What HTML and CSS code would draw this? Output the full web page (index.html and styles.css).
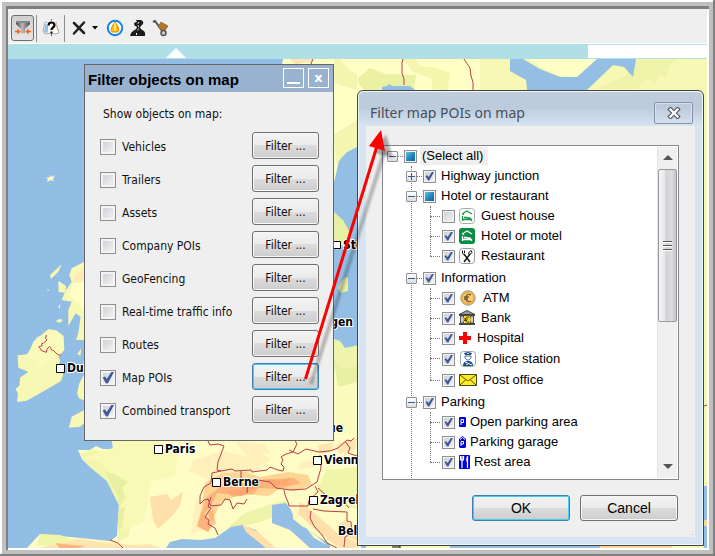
FILE: index.html
```html
<!DOCTYPE html>
<html lang="en">
<head>
<meta charset="utf-8">
<title>Filter objects on map</title>
<link rel="stylesheet" href="styles.css">
</head>
<body>
<div class="frame">
<div class="screen">
  <div class="toolbar">
    <button class="tool pressed" aria-label="Filter objects">
      <svg width="18" height="18" viewBox="0 0 18 18"><defs><linearGradient id="fun"><stop offset="0" stop-color="#444"/><stop offset=".45" stop-color="#bbb"/><stop offset="1" stop-color="#444"/></linearGradient></defs><path d="M2 2h14v3l-5 5v4H7v-4L2 5z" fill="url(#fun)"/><path d="M2 2h14v2H2z" fill="#888"/><path d="M1 12.500h4M17 12.500h-4M3.500 10.500l2 2-2 2M14.500 10.500l-2 2 2 2" fill="none" stroke="#f5611c" stroke-width="1.500"/></svg>
    </button>
    <span class="sep"></span>
    <button class="tool" aria-label="Map help">
      <svg width="18" height="18" viewBox="0 0 18 18"><path d="M3 3l5 1 6-1 3 11-4 1-4-1-6 1-2-3z" fill="#fff" stroke="#aaa"/><path d="M3 5l3 1-1 7-3 1z" fill="#8fc4ee"/><path d="M6 5l-1 9M14 5l2 7" stroke="#ef9d80"/><path d="M9.500 0v3M9.500 15v2" stroke="#e33"/><path d="M6.500 6.500q0-3 3-3t3 2.500q0 1.500-1.500 2.500-1.500 1-1.500 2.500" fill="none" stroke="#fff" stroke-width="4"/><path d="M6.500 6.500q0-3 3-3t3 2.500q0 1.500-1.500 2.500-1.500 1-1.500 2.500" fill="none" stroke="#000" stroke-width="2.200"/><path d="M8.500 12.500h2v2h-2z"/></svg>
    </button>
    <span class="sep"></span>
    <button class="tool" aria-label="Delete">
      <svg width="14" height="14" viewBox="0 0 14 14"><path d="M2 2l10 10M12 1.500L2 12.500" stroke="#222" stroke-width="2.500" stroke-linecap="round"/></svg>
    </button>
    <button class="tool caret" aria-label="Delete options">
      <svg width="6" height="4" viewBox="0 0 6 4"><path d="M0 0h6L3 3.500z"/></svg>
    </button>
    <button class="tool alert" aria-label="Traffic events">
      <svg width="18" height="18" viewBox="0 0 18 18"><circle cx="9" cy="9" r="7.200" fill="#fff" stroke="#0b87ea" stroke-width="2"/><path d="M9 3q-3 3-4 8l1 2h6l1-2q-1-5-4-8z" fill="#ffb90c" stroke="#e88b00"/><path d="M9 4v8" stroke="#fff1a5" stroke-width="1.500"/></svg>
    </button>
    <button class="tool" aria-label="Routes">
      <svg width="17" height="18" viewBox="0 0 17 18"><path d="M7 1h5q3 1 2 4l-3 3q0 2 4 4 2 2 1 5H1q0-3 3-5 4-2 4-4-3-1-3-3 0-2 3-2z" fill="#1d1d1d"/><path d="M10 3Q8 5 9.500 7.500 10 10 8 12M7.500 14v2" fill="none" stroke="#fff" stroke-dasharray="2 1.500"/></svg>
    </button>
    <button class="tool" aria-label="Transport">
      <svg width="18" height="18" viewBox="0 0 18 18"><path d="M1 3l2-1 8 11" fill="none" stroke="#555" stroke-width="2"/><path d="M9 3l7 4-4 6-6-5z" fill="#b5762c" stroke="#80521e" stroke-width=".6"/><circle cx="11.500" cy="14" r="2.500" fill="#ccc" stroke="#555" stroke-width="1.500"/></svg>
    </button>
  </div>
  <div class="band"><span class="notch"></span><span class="band-field"></span></div>

  <main class="map">
    <svg class="map-art" viewBox="8 59 699 489" preserveAspectRatio="xMinYMin slice" role="img" aria-label="Map of Europe">
      <defs>
        <pattern id="dots" width="2" height="2" patternUnits="userSpaceOnUse"><path d="M0 0h1v1H0z" fill="#7fb1df" opacity=".35"/></pattern>
        <filter id="soft" x="-20%" y="-20%" width="140%" height="140%"><feGaussianBlur stdDeviation="1.200"/></filter>
      </defs>
      <path d="M8 59h699v489H8z" fill="#94bfe5"/>
      <path d="M8 59h699v489H8z" fill="url(#dots)"/>
      <path d="M46 178l4-1 1-2 1 2 3-2-2 4 1 2-3-1-4 2 1-3z" fill="#ffffc6"/>
      <path d="M283 59l-1 5 8 30h70v53l-7 2-8 10-9 12-4 22-10 30v40l14 9 9-4 3-9-7-9-7-8V59h375v489H560l-26-40z" fill="#f8f8b5"/>
      <!-- top -->
      <path d="M350 59h130v32H350zM530 59h80l-25 18-24-1-20-9z" fill="#ffffc6"/>
      <path d="M283 59h74v30h-74z" fill="#ffffc6"/>
      <path d="M338 59h10l4 4 4 9-8 3-10-4-4-4z" fill="#ffe0aa"/>
      <path d="M290 59l22 0 1 3-10 1-8 2zM334 114l5 6-5 1z" fill="#ffe6b8"/>
      <path d="M370 68l16 6 30 1-2 14-50 1-8-10z" fill="#eaf1a2"/>
      <path d="M640 59h37l-8 8-3 12-6-5-5 10-7-6-10 11h-42l30-14 6-12z" fill="#eff4aa"/>
      <path d="M403 59h13l3 7 17 2 14 5-2 17h-15l-2-12-18-6z" fill="#f6f5ae"/>
      <path d="M510 59h13l17 10 20 8h17l20-18h39l-3 18-9-10-11-2-26 25h-60l-1-10-16-9z" fill="#94bfe5"/>
      <path d="M382 91v-4l5-1 2-2 3 2h18l5 4v1z" fill="#94bfe5"/>
      <!-- gap between the windows -->
      <path d="M334 147h24v204h-24z" fill="#94bfe5"/>
      <path d="M334 59h24v87l-10 5-9 9-3 14-2 8z" fill="#ffffc6"/>
      <path d="M334 59h6l10 12 7 3v16l-23-7zM357 120v27l-12 6-9 12-2-30z" fill="#f4f5ae"/>
      <path d="M334 212l9 8 8 14-5 8-8 8-4-2zM338 288l6-10 4-1v14l-7 2z" fill="#e6efa2"/>
      <path d="M334 339l6 2 5 7 13-3v45h-24z" fill="#eff4ac"/>
      <path d="M334 370h24v80h-24z" fill="#fcfbbd"/><path d="M334 360l10 9 14-3v16l-20 5z" fill="#e6efa2"/>
      <!-- British Isles -->
      <g transform="translate(0 250) scale(.3333)">
        <path d="M145 238l24 3 22 17 2 42-18 22 5 8-4 18 14 25-7 20-60 35-43 24-26 4-3-3 3-22-7-15 11-9 2-24 25-18-30-12-2-37 31-3 17-39z" fill="#f7f8b3"/>
        <path d="M110 260l60-14 18 15 4 40-30 12-40 40-10-20-40-15 20-20z" fill="#ffffc6" opacity=".4"/>
        <path d="M150 75l35-32-10 22-22 22zM175 92l23 16-2 20-20-2zM175 170l5-8v16zM170 210l12-4 6 6-8 6-10-2zM140 120l6-3v6zM232 312l12-17-3 22zM253 35l-38 20-7 20 7 20-20 30-10 25 30 5-10 25v48l22-38 15 10-7 50-7 20h26zM254 370l-16 30-7 30 6 15 20 8zM253 480l-38 20-8 33 33-3 14-11z" fill="#f7f8b3"/>
        <path d="M253 55l-30 20-3 25-15 25 30 10 18 35z" fill="#ffe9b6"/>
        <path d="M253 95l-35 5-10 35 15 15 30 30z" fill="#ffffc6"/>
        <path d="M139 255l-2 10 4 5-10 9-7 3 3 5-11 4 6 5 2 6 15 5 3-12 7-5 3 2 2 8 7 2 12 12 10 2" fill="none" stroke="#bd3d49" stroke-width="3"/>
      </g>
      <!-- France, Spain, Alps -->
      <path d="M111 435h250v113H27l13-14 20 2 50 5 7-5 2-31-12-24-18-15-7-7-4-9h12l6-4 7 3h10z" fill="#fffdc5"/>
      <path d="M80 454l12-5 8 3h13v-11h28l-3 20 8 14-6 22-6 10-6 30-10 5 1-37-12-24-18-15z" fill="#f1f6ac"/>
      <path d="M113 441h45l20 15-3 20-24 5-7 40-20 10-4-34-6-20-14-14-17-5 15-5 15-5z" fill="#f8f9b4"/>
      <path d="M106 472l8 2 14 8-6 6 4 10-7 8-2-12-8-14zM119 510l6-3-3 20-5 3z" fill="#e6efa2"/>
      <path d="M150 497l17-3 4 6 12-8-3 14-8 10-14 13-5-9-2-15z" fill="#ffe0aa"/>
      <path d="M193 460l30-9 20 5 14-7 14 10-13 12-29 3-20 6-20-9zM235 441l30 3 5 9-24 2zM298 464l24-7-8 10-15 3zM196 500h12l4 28-22 6z" fill="#fff0bc"/>
      <path d="M205 483l17-10 25-1 13 5 28-5 20 3 4 10-17 6-16-2-10 7-28-2-20 8-12 26-12-2 5-20z" fill="#ffd596"/>
      <path d="M207 497l13-10 21-3 17-4 36-2 7 5-22 6-23-1-14 8-25-3-5 11-8 10 8 12-4 6-11-6 4-12z" fill="#fcb47c"/>
      <path d="M226 492l14-3 12-5 7 4-6 6-20 3zM265 479l18 2 7-4-3 8-12 1zM208 512l5-2 3 14-5 2z" fill="#f99a63" opacity=".5"/>
      <path d="M245 513l20-7 22-6-5 14-25 9-30 6 8-8z" fill="#edf3a8"/>
      <path d="M166 548l4-6 12-3 18 1 15-2 16-11 11-2 14 5 12 18z" fill="#94bfe5"/>
      <path d="M272 505l14-2 5 7 4 10 19 14 16 10v4h-20l-20-18-18-7z" fill="#94bfe5"/>
      <path d="M293 511l4-3 3 12 8 8-5-1-10-8zM307 529l12 9 8 7-13-7z" fill="#fff9bd"/>
      <path d="M242 524l16 8 18 16h-10l-20-16zM300 502l12 9 25 22 21 10v5h-18l-22-16-20-18zM337 526l9-7 5 9 6 3v10l-10-4z" fill="#ffe0aa"/>
      <path d="M326 470l31-3v42l-25-6-15-12z" fill="#eff5a9"/>
      <path d="M336 445l20-7v11l-17 5zM318 445l16-2-4 9-11 2z" fill="#ffe5b0"/>
      <path d="M60 541l20-2 28 4 25 2 16-1 12 4H40z" fill="#ffe5ae"/><path d="M40 534l20 1 15 5-18 4-20 2z" fill="#eff5a9"/><path d="M55 543l8 1 22 2-6 2H60z" fill="#fcb47c"/>
      <path d="M366 546h84v2h-84z" fill="#f8f8b5"/><path d="M450 546h150v2H450zM704 486h3v62h-3z" fill="#94bfe5"/><path d="M704 520h3v6h-3zM600 546h72v2h-72z" fill="#ffd596"/>
      <!-- borders -->
      <path d="M313 59l-3 7M403 59l-1 4v10l2 6v6M464 59l6 9 1 8 2 6v8M208 441l2 4 8-1 6 2-3 8-3 8-1 8 4 1 11-2 3 2 16-1 1 2 15-2 3-3 8 3 5 1 1-4-3-3 2-4-2-3 5-3 7-2 4-8-4-7-7-6M289 450l9 4 3-2 5-3 13 3 11-1 8-3 9-8 4 1 3-3M221 471l-9 2-1 10-7 4-4 9v8l4-4 4-1 3 7 10-1 4-6 5 1 3 9 4-6 7 1 3-5M211 497l-3 10 3 1-4 6-2 3 4 3-1 4 7 4 3 7M241 471v11l7-3-1 14M258 480l12 2 6 6 15 2 15-1 11-7 4-14-1-13M284 490l1 5 3 7 1 4h19l1-6 9-8-3-6M318 488l9 8 10 4 7 2 5 6M311 511l-1 7 4 8 8 9 5 8 10 5M313 509l11 2 23 1v9l4 1 1 11-7 4-1 10M345 441l5 7-2 5 9 3M110 540l8 3 5 5M704 406l3-1" fill="none" stroke="#b83e48"/>
      <path d="M392 546h8v2h-8" fill="none" stroke="#111"/>
      <g class="city-dots"><path d="M56.500 364.500h8v8h-8zM154.500 445.500h8v8h-8zM212.500 478.500h8v8h-8zM313.500 456.500h8v8h-8zM309.500 496.500h8v8h-8zM333.500 241.500h7v7h-7z"/></g>
      <g class="city-names">
        <text x="67" y="372">Dublin</text><text x="165" y="453">Paris</text><text x="223" y="486">Berne</text>
        <text x="324" y="464">Vienna</text><text x="320" y="504">Zagreb</text><text x="338" y="535">Belgrade</text>
        <text x="343" y="249">Stockholm</text><text x="353" y="326" text-anchor="end">gen</text><text x="343" y="432" text-anchor="end">ue</text>
      </g>
    </svg>

    <section class="panel" aria-label="Filter objects on map">
      <header class="panel-head"><h1>Filter objects on map</h1><button class="mini" aria-label="Minimize"><span class="dash"></span></button><button class="mini" aria-label="Close">x</button></header>
      <div class="panel-body">
        <p>Show objects on map:</p>
        <div class="option"><label><input class="big" type="checkbox">Vehicles</label><button class="btn">Filter ...</button></div>
        <div class="option"><label><input class="big" type="checkbox">Trailers</label><button class="btn">Filter ...</button></div>
        <div class="option"><label><input class="big" type="checkbox">Assets</label><button class="btn">Filter ...</button></div>
        <div class="option"><label><input class="big" type="checkbox">Company POIs</label><button class="btn">Filter ...</button></div>
        <div class="option"><label><input class="big" type="checkbox">GeoFencing</label><button class="btn">Filter ...</button></div>
        <div class="option"><label><input class="big" type="checkbox">Real-time traffic info</label><button class="btn">Filter ...</button></div>
        <div class="option"><label><input class="big" type="checkbox">Routes</label><button class="btn">Filter ...</button></div>
        <div class="option"><label><input class="big" type="checkbox" checked>Map POIs</label><button class="btn active">Filter ...</button></div>
        <div class="option"><label><input class="big" type="checkbox" checked>Combined transport</label><button class="btn">Filter ...</button></div>
      </div>
    </section>

    <section class="dialog" aria-label="Filter map POIs on map">
      <header class="dialog-head"><h2>Filter map POIs on map</h2>
        <button class="close" aria-label="Close"><svg width="14" height="12" viewBox="0 0 14 12"><path d="M3.500 2.500l7 7M10.500 2.500l-7 7" stroke="#4a5058" stroke-width="4.500" stroke-linecap="square"/><path d="M3.500 2.500l7 7M10.500 2.500l-7 7" stroke="#fff" stroke-width="2.400" stroke-linecap="square"/></svg></button>
      </header>
      <div class="dialog-body">
        <div class="listbox">
          <div class="tree">
            <div class="row"><button class="exp" aria-label="Collapse"></button><label><input type="checkbox" class="mixed"><span class="selected">(Select all)</span></label></div>
            <ul class="groups">
              <li><div class="row"><button class="exp plus" aria-label="Expand"></button><label><input type="checkbox" checked>Highway junction</label></div></li>
              <li><div class="row"><button class="exp" aria-label="Collapse"></button><label><input type="checkbox" class="mixed">Hotel or restaurant</label></div>
                <ul class="items">
                  <li class="row"><label><input type="checkbox"><svg width="16" height="16" viewBox="0 0 16 16"><rect x=".5" y=".5" width="15" height="15" rx="3" fill="#fff" stroke="#aaa"/><path d="M3 6l5-3 5 3M4.500 6v1M3.500 8v5M3.500 11.500h9V13M5 9.500h2l5 1" fill="none" stroke="#109848" stroke-width="1.300"/></svg>Guest house</label></li>
                  <li class="row"><label><input type="checkbox" checked><svg width="16" height="16" viewBox="0 0 16 16"><rect width="16" height="16" rx="3" fill="#078e43"/><path d="M3 6l5-3 5 3M4.500 6v1M3.500 8v5M3.500 11.500h9V13M5 9.500h2l5 1" fill="none" stroke="#fff" stroke-width="1.300"/></svg>Hotel or motel</label></li>
                  <li class="row"><label><input type="checkbox" checked><svg width="16" height="16" viewBox="0 0 16 16"><rect x=".5" y=".5" width="15" height="15" rx="3" fill="#fff" stroke="#999"/><path d="M5 6l6 8M11 6l-6 8" stroke="#111" stroke-width="1.400"/><path d="M3.500 2.500v3l2 1.500M5.500 2.500V5M12 2.500L9.500 5l1 2L13 4.500z" fill="none" stroke="#111"/></svg>Restaurant</label></li>
                </ul>
              </li>
              <li class="spaced"><div class="row"><button class="exp" aria-label="Collapse"></button><label><input type="checkbox" checked>Information</label></div>
                <ul class="items">
                  <li class="row"><label><input type="checkbox" checked><svg width="18" height="16" viewBox="0 0 18 16"><circle cx="9" cy="8" r="7.200" fill="#ffbe48" stroke="#999"/><circle cx="9" cy="8" r="5.500" fill="#ffcc70" stroke="#e9a62e"/><path d="M12 5q-4-2-5 2v2q1 4 5 2M5 7h5M5 9h4" fill="none" stroke="#705a32" stroke-width="1.300"/></svg>ATM</label></li>
                  <li class="row"><label><input type="checkbox" checked><svg width="16" height="16" viewBox="0 0 16 16"><path d="M0 4l8-4 8 4v2H0zM0 13h16v2H0z" fill="#444"/><path d="M2 4l6-3 6 3z" fill="#999"/><path d="M1.500 6h3v7h-3zM11.500 6h3v7h-3z" fill="#ccc" stroke="#555"/><circle cx="8" cy="9.500" r="3.800" fill="#fd0"/><path d="M10.500 7.500Q7 5.500 6.500 9.500 7 13 10.500 12M5 9h4M5 10.500h3" fill="none" stroke="#222" stroke-width=".8"/></svg>Bank</label></li>
                  <li class="row"><label><input type="checkbox" checked><svg width="12" height="12" viewBox="0 0 12 12"><path d="M4 0h4v4h4v4H8v4H4V8H0V4h4z" fill="#f00"/></svg>Hospital</label></li>
                  <li class="row tall"><label><input type="checkbox" checked><svg width="18" height="16" viewBox="0 0 18 16"><rect x="1.500" y=".5" width="15" height="15" rx="3" fill="#fff" stroke="#9aa"/><path d="M5 2l4-1 4 1-1 2H6zM4 15q0-5 5-5t5 5z" fill="#164c98"/><path d="M6 5h6v2l-2 2H8L6 7z" fill="#fff" stroke="#164c98" stroke-width=".8"/><path d="M6 11l7 3" stroke="#fff"/><path d="M8 2h2v1H8zM7 13h2v1H7z" fill="#fd0"/></svg>Police station</label></li>
                  <li class="row"><label><input type="checkbox" checked><svg width="18" height="12" viewBox="0 0 18 12"><path d="M.5.500h17v11H.5z" fill="#ffec28" stroke="#4b4700"/><path d="M1 1l8 6 8-6M1 11l6-5.500M17 11l-6-5.500" fill="none" stroke="#4b4700" stroke-width=".9"/></svg>Post office</label></li>
                </ul>
              </li>
              <li class="spaced"><div class="row"><button class="exp" aria-label="Collapse"></button><label><input type="checkbox" checked>Parking</label></div>
                <ul class="items">
                  <li class="row"><label class="close-icon"><input type="checkbox" checked><svg width="7" height="10" viewBox="0 0 7 10"><rect width="7" height="10" rx="1" fill="#00d"/><path d="M2 8V2.500h2.500v3H2" fill="none" stroke="#fff"/></svg>Open parking area</label></li>
                  <li class="row"><label class="close-icon"><input type="checkbox" checked><svg width="7" height="12" viewBox="0 0 7 12"><path d="M0 3l3.500-3L7 3v8l-1 1H1l-1-1z" fill="#00d"/><path d="M1 3.500l2.500-2L6 3.500M2 10V5.500h2.500V8H2" fill="none" stroke="#fff"/></svg>Parking garage</label></li>
                  <li class="row"><label class="close-icon"><input type="checkbox" checked><svg width="11" height="14" viewBox="0 0 11 14"><rect width="11" height="14" rx="1" fill="#00d"/><path d="M1.500 1v4h3V1M3 1v12M8.500 1v12M8.500 2q-1.500 2 0 5" fill="none" stroke="#fff" stroke-width="1.200"/></svg>Rest area</label></li>
                </ul>
              </li>
              <li class="spaced"><div class="row"><button class="exp" aria-label="Expand"></button><label><input type="checkbox" checked aria-label="More"></label></div></li>
            </ul>
          </div>
          <div class="scroll"><span class="arrow up"></span><span class="thumb"><i></i><i></i><i></i></span><span class="arrow down"></span></div>
        </div>
        <div class="actions"><button class="btn active">OK</button><button class="btn">Cancel</button></div>
        <span class="grip"></span>
      </div>
    </section>

    <svg class="pointer" width="100" height="270" viewBox="300 120 100 270" aria-hidden="true">
      <path d="M311 384L385 150" stroke="#000" stroke-width="4" opacity=".25" filter="url(#soft)"/><path d="M386 134l-11 19 18 5z" opacity=".3" filter="url(#soft)"/>
      <path d="M305.500 379L377 146" stroke="#f00" stroke-width="3"/><path d="M381 130l-12 16 16 5z" fill="#f00"/>
    </svg>
  </main>
</div>
</div>
</body>
</html>
```
FILE: styles.css
```css
* { box-sizing: border-box; }
body { margin: 0; background: #fff; color: #111; font: 12px/16px "DejaVu Sans Condensed", "DejaVu Sans", sans-serif; }
button { margin: 0; padding: 0; border: 0; background: none; color: inherit; font: inherit; }
h1, h2, p, ul { margin: 0; padding: 0; }
ul { list-style: none; }

/* Bevelled outer frame */
.frame { display: flex; min-height: 100vh; padding-top: 2px; padding-left: 2px; box-shadow: inset -2px -2px #808080; }
.screen { display: flex; flex: 1; flex-direction: column; margin: 0 2px 2px 0; padding: 3px 2px 2px; border: 4px solid #c0c0c0; box-shadow: inset 2px 3px #808080, inset -2px -2px #fff; }

.toolbar { display: flex; align-items: center; height: 34px; padding: 4px 3px 0; background: #efefef; }
.tool { display: flex; align-items: center; justify-content: center; width: 23px; height: 26px; }
.pressed { border: 1px solid #6e6e6e; border-radius: 3px; background: linear-gradient(#cfcfcf, #e6e6e6); }
.sep { width: 1px; height: 27px; margin: 0 2px; background: #8b8b8b; }
.caret { width: 10px; }
.alert { margin-left: 3px; }

.band { display: flex; align-items: flex-end; justify-content: space-between; height: 16px; border-top: 1px solid #fff; background: #b0e0e6; }
.notch { width: 0; margin: 0 0 1px 158px; border: 10px solid transparent; border-top: 0; border-bottom-color: #fff; }
.band-field { width: 17%; height: 13px; margin-bottom: 1px; background: #fff; }

.map { position: relative; flex: 1; min-height: 489px; overflow: hidden; background: #94bfe5; }
.map-art { position: absolute; inset: 0; width: 100%; height: 100%; }
.city-dots { fill: #fff; stroke: #000; stroke-width: 1; }
.city-names { font-weight: bold; font-size: 12px; fill: #000; stroke: #fff; stroke-width: 2px; paint-order: stroke; }

/* Shared controls */
.btn { border: 1px solid #707070; border-radius: 3px; background: linear-gradient(#f3f3f3, #ebebeb 50%, #dcdcdc 50%, #cdcdcd); box-shadow: inset 0 0 0 1px #f7f7f7; text-align: center; }
.btn.active { border-color: #3c7fb1; box-shadow: inset 0 0 0 1px #46cdf5; }
input { position: relative; flex: none; width: 13px; height: 13px; margin: 0; appearance: none; border: 1px solid #8e8f8f; background: linear-gradient(135deg, #c9cdd4, #f6f6f6); box-shadow: inset 0 0 0 1px #f4f4f4; }
.big { width: 16px; height: 16px; box-shadow: inset 0 0 0 2px #f4f4f4; }
input:checked::after { content: ""; position: absolute; inset: 1px; background: #43599c; clip-path: polygon(5% 50%, 25% 42%, 40% 62%, 80% 0, 100% 5%, 48% 100%, 34% 100%); }
.mixed { background: linear-gradient(135deg, #7ac8e8, #1b7fb8 60%, #135d95); box-shadow: inset 0 0 0 1px #f4f4f4; }

/* Object filter window */
.panel { position: absolute; left: 76px; top: 5px; width: 250px; border: 1px solid #666; background: #efefef; }
.panel-head { display: flex; gap: 4px; height: 27px; padding: 3px 4px 0 3px; background: #99b2d0; }
.panel-head h1 { flex: 1; font: bold 15px/23px "Liberation Sans", Arial, sans-serif; color: #000; white-space: nowrap; }
.mini { display: flex; justify-content: center; width: 21px; height: 20px; border: 1px solid #fff; color: #fff; font: bold 13px/17px "DejaVu Sans", sans-serif; }
.dash { width: 13px; height: 2px; align-self: flex-end; margin-bottom: 3px; background: #fff; }
.panel-body { padding: 14px 14px 17px 15px; }
.panel-body p { padding: 0 3px; margin-bottom: 10px; line-height: 16px; }
.option { display: flex; align-items: center; justify-content: space-between; height: 27px; margin-bottom: 6px; }
.option:last-child { margin-bottom: 0; }
.option label { display: flex; align-items: center; gap: 6px; padding-top: 2px; white-space: nowrap; }
.option .btn { width: 67px; height: 27px; }

/* POI dialog */
.dialog { position: absolute; left: 349px; top: 31px; width: 347px; padding: 0 8px 8px; border: 1px solid #444; border-radius: 6px 6px 0 0; background: #d7e4f1; box-shadow: inset 0 0 0 1px #edf4fb; }
.dialog::before { content: ""; position: absolute; inset: 1px 1px auto; height: 34px; border-radius: 5px 5px 0 0; background: linear-gradient(#c0cddd, #bccadb 45%, #d7e4f1); }
.dialog-head { position: relative; display: flex; align-items: center; justify-content: space-between; height: 35px; padding: 8px 2px 0 4px; }
.dialog-head h2 { font: 14px/24px "Noto Sans", sans-serif; color: #46505c; white-space: nowrap; }
.close { display: flex; align-items: center; justify-content: center; width: 39px; height: 22px; border: 1px solid #8793ad; border-radius: 2px; box-shadow: inset 0 0 0 1px #d6e0ec; }
.dialog-body { position: relative; padding: 19px 16px 16px; background: #efefef; font: 13px/20px "Liberation Sans", Arial, sans-serif; color: #000; }
.listbox { display: flex; height: 335px; padding: 1px; border: 1px solid #828790; background: #fff; }
.tree { flex: 1; overflow: hidden; margin-top: -1px; padding-left: 3px; }
.row { position: relative; display: flex; align-items: center; height: 20px; gap: 6px; }
.tall { height: 22px; }
.row label { display: flex; align-items: center; gap: 5px; white-space: nowrap; }
.items label { gap: 4px; }
.items label svg { margin-right: 2px; }
.items .close-icon svg { margin-right: 0; }
.selected { margin-left: -2px; padding: 0 5px 0 2px; background: #efefef; line-height: 18px; }
.exp { position: relative; width: 11px; height: 11px; border: 1px solid #919191; border-radius: 1px; background: linear-gradient(90deg, #3b55a0, #3b55a0) center / 7px 1px no-repeat, linear-gradient(#fff, #ddd); }
.plus { background: linear-gradient(#3b55a0, #3b55a0) center / 7px 1px no-repeat, linear-gradient(#3b55a0, #3b55a0) center / 1px 7px no-repeat, linear-gradient(#fff, #ddd); }
.exp::after { content: ""; position: absolute; left: 10px; top: 4px; width: 5px; border-top: 1px dotted #777; }
.groups { margin-left: 5px; padding-left: 14px; position: relative; }
.groups::before { content: ""; position: absolute; left: 19px; top: 0; bottom: 0; border-left: 1px dotted #777; }
.spaced { margin-top: 2px; }
.items { position: relative; margin-left: 24px; padding-left: 12px; }
.items::before { content: ""; position: absolute; left: 0; top: 0; bottom: 10px; border-left: 1px dotted #777; }
.items .row::before { content: ""; position: absolute; left: -12px; top: 10px; width: 10px; border-top: 1px dotted #777; }

.scroll { display: flex; flex-direction: column; align-items: center; width: 20px; border-left: 1px solid #e4e4e4; background: #f0f0f0; }
.arrow { width: 0; border: 5px solid transparent; }
.up { margin: 3px 0 9px; border-bottom-color: #555; }
.down { margin: auto 0 4px; border-top-color: #555; }
.thumb { display: flex; flex-direction: column; align-items: center; justify-content: center; gap: 2px; width: 19px; height: 153px; border: 1px solid #999; border-radius: 2px; background: linear-gradient(90deg, #f5f5f5, #e7e7e9 35%, #d2d2d6 40%, #dcdce0 75%, #c5c5c9); }
.thumb i { width: 9px; height: 2px; background: linear-gradient(#555 50%, #fff 50%); }
.actions { display: flex; justify-content: flex-end; gap: 10px; padding: 15px 1px 0 0; }
.actions .btn { width: 98px; height: 26px; font-size: 14px; }
.grip { position: absolute; right: 1px; bottom: 1px; width: 6px; height: 6px; background: radial-gradient(#bbb 1px, transparent 1px) 0 0 / 3px 3px; clip-path: polygon(100% 0, 100% 100%, 0 100%); }
.pointer { position: absolute; left: 292px; top: 61px; pointer-events: none; }
```
